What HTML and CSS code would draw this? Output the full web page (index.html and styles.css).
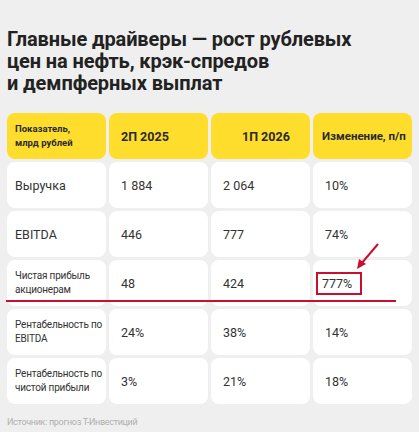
FILE: index.html
```html
<!DOCTYPE html>
<html lang="ru">
<head>
    <meta charset="UTF-8">
    <link rel="stylesheet" href="styles.css">
</head>
<body>
    <div class="page">
        <h1 class="title">Главные драйверы — рост рублевых<br>цен на нефть, крэк-спредов<br>и демпферных выплат</h1>

        <div class="table">
            <div class="cell head small first">Показатель,<br>млрд рублей</div>
            <div class="cell head">2П 2025</div>
            <div class="cell head shift">1П 2026</div>
            <div class="cell head tight">Изменение, п/п</div>

            <div class="cell first">Выручка</div>
            <div class="cell">1 884</div>
            <div class="cell">2 064</div>
            <div class="cell">10%</div>

            <div class="cell first">EBITDA</div>
            <div class="cell">446</div>
            <div class="cell">777</div>
            <div class="cell">74%</div>

            <div class="cell first label">Чистая прибыль<br>акционерам</div>
            <div class="cell">48</div>
            <div class="cell">424</div>
            <div class="cell"><span class="mark">777%</span></div>

            <div class="cell first label">Рентабельность по<br>EBITDA</div>
            <div class="cell">24%</div>
            <div class="cell">38%</div>
            <div class="cell">14%</div>

            <div class="cell first label">Рентабельность по<br>чистой прибыли</div>
            <div class="cell">3%</div>
            <div class="cell">21%</div>
            <div class="cell">18%</div>

            <div class="underline"></div>
            <svg class="arrow" width="30" height="30" viewBox="0 0 30 30">
                <line x1="25" y1="2" x2="8" y2="22" stroke="#c8102e" stroke-width="2"/>
                <polygon points="4,27 6,17 13,22" fill="#c8102e"/>
            </svg>
        </div>

        <div class="source">Источник: прогноз Т-Инвестиций</div>
    </div>
</body>
</html>
```

FILE: styles.css
```css
body {
    margin: 0;
    background-color: #efefef;
    font-family: Roboto, "Noto Sans", sans-serif;
    color: #2b2b2b;
}

.page {
    width: 419px;
    height: 432px;
    padding: 28px 7px 0 7px;
    box-sizing: border-box;
}

.title {
    margin: 0 0 19px 0;
    font-size: 20px;
    line-height: 22px;
    font-weight: 700;
    letter-spacing: -0.1px;
    color: #222;
}

.table {
    position: relative;
    display: grid;
    grid-template-columns: repeat(4, 1fr);
    grid-auto-rows: 46px;
    gap: 3px;
}

.cell {
    background-color: #ffffff;
    border-radius: 8px;
    display: flex;
    align-items: center;
    padding-left: 12px;
    font-size: 12.5px;
    color: #333;
}

.cell.first {
    padding-left: 8px;
}

.cell.label {
    font-size: 10px;
    line-height: 14px;
    letter-spacing: -0.2px;
    white-space: nowrap;
}

.cell.head {
    background-color: #ffdd2d;
    font-weight: 700;
    font-size: 12.5px;
    color: #2a2a2a;
}

.cell.head.small {
    font-size: 9.5px;
    line-height: 14px;
}

.cell.head.shift {
    padding-left: 31px;
}

.cell.head.tight {
    padding-left: 9px;
    font-size: 11.5px;
}

.mark {
    border: 2px solid #c8102e;
    padding: 2px 8px 2px 4px;
    margin-left: -9px;
}

.underline {
    position: absolute;
    left: -1px;
    top: 187px;
    width: 390px;
    height: 2px;
    background-color: #c8102e;
}

.arrow {
    position: absolute;
    left: 346px;
    top: 129px;
}

.source {
    margin-top: 13px;
    font-size: 9px;
    color: #b0b0b0;
    letter-spacing: -0.3px;
}
```
